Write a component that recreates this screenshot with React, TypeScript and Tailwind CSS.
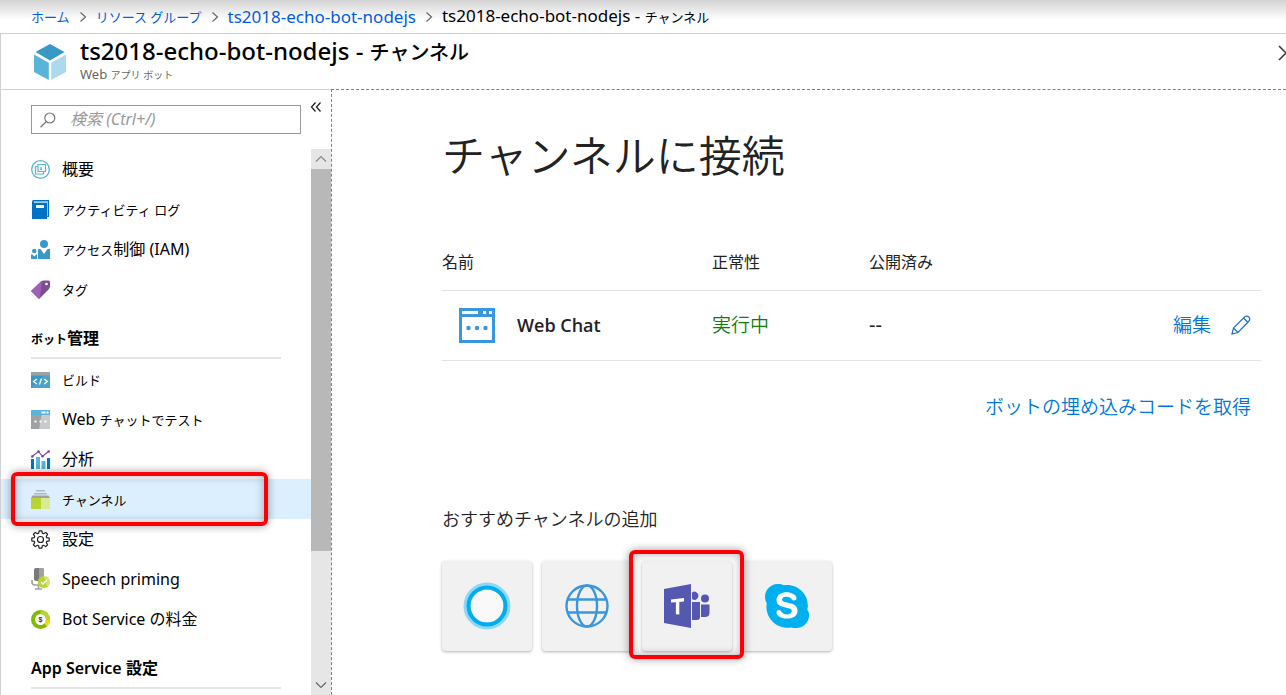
import React from 'react';

const Kana = ({ children }: { children: React.ReactNode }) => <span className="text-[13px]">{children}</span>;

const OverviewIcon = () => (
  <svg viewBox="0 0 19 19" className="size-[19px]" fill="none" stroke="#59b4d9" strokeWidth="1.3">
    <circle cx="9.5" cy="9.5" r="8.8" />
    <path d="M6.500 6.500H4.500v7.500h8v-2M7 4.500h7.500v7H7z" strokeWidth="1.2" />
    <path d="M10 7v2.500M9 9.500h2" strokeWidth="1.2" />
  </svg>
);
const BookIcon = () => (
  <svg viewBox="0 0 19 19" className="size-[19px]">
    <path d="M1 1.500Q1 0 2.500 0H18v17H16V2H3v1h13v16H1z" fill="#0072c6" />
    <path d="M2.500 1.200H17v15h-1V3H3z" fill="#a6cbe8" />
    <path d="M1 3h15v16H1z" fill="#0072c6" />
    <path d="M5 5h8v3H5z" fill="#fff" />
  </svg>
);
const PeopleIcon = () => (
  <svg viewBox="0 0 19 19" className="size-[19px]" fill="#3999c6">
    <circle cx="13" cy="4" r="4" />
    <circle cx="3.300" cy="11" r="2.300" />
    <path d="M7 9h2.500l3.500 5 3.500-5H19v10H7z" />
    <path d="M0 14.500h1.500l1.800 2 1.800-2H6V19H0z" />
  </svg>
);
const TagIcon = () => (
  <svg viewBox="0 0 19 19" className="size-[19px]">
    <path d="M0 11 10 1.500Q11 .5 13 .5h4.500Q19 .5 19 2v4Q19 7.500 18 9L8 19z" fill="#804998" />
    <path d="M0 11 10 1.500 11 .8 9 17.700 8 19z" fill="#9b62b3" />
    <circle cx="15.500" cy="4" r="1.300" fill="#fff" />
  </svg>
);
const BuildIcon = () => (
  <svg viewBox="0 0 19 19" className="size-[19px]">
    <path d="M0 2h19v16H0z" fill="#3999c6" />
    <path d="M0 2h19v3.500H0z" fill="#a0a1a2" />
    <path d="m0 18 13-12.500h6V18z" fill="#fff" opacity=".1" />
    <path d="m6 9-3.500 2.500L6 14M13 9l3.500 2.500L13 14M10.500 8.500l-2 6" fill="none" stroke="#fff" strokeWidth="1.200" />
  </svg>
);
const ChatTestIcon = () => (
  <svg viewBox="0 0 19 19" className="size-[19px]">
    <path d="M0 0h19v19H0z" fill="#c8cacc" />
    <path d="M0 5h10.500L8 19H0z" fill="#a0a1a2" />
    <path d="M0 0h19v5H0z" fill="#59b4d9" />
    <path d="M10.500 1.500h4v2h-4zM15.500 1.500h2v2h-2z" fill="#fff" />
    <path d="M3.500 10.500h2v2h-2zM8.500 10.500h2v2h-2zM13.500 10.500h2v2h-2z" fill="#fff" />
  </svg>
);
const AnalyticsIcon = () => (
  <svg viewBox="0 0 19 19" className="size-[19px]">
    <path d="M0 9h3v10H0zM16 8h3v11h-3z" fill="#0072c6" />
    <path d="M5 7h4v12H5zM10.500 11h4v8h-4z" fill="#59b4d9" />
    <path d="m1 6.500 6.500-5 4 5 6.500-5.500" fill="none" stroke="#804998" strokeWidth="1.200" />
    <g fill="#804998"><circle cx="1.300" cy="6.500" r="1.300" /><circle cx="7.500" cy="1.600" r="1.300" /><circle cx="11.500" cy="6.300" r="1.300" /><circle cx="17.700" cy="1.500" r="1.300" /></g>
  </svg>
);
const ChannelIcon = () => (
  <svg viewBox="0 0 19 19" className="size-[19px]">
    <path d="M5 0h9v1.500H5zM3 3h13v1.500H3z" fill="#b4b5b6" />
    <path d="M1.500 5.500h16L19 8H0z" fill="#a0a1a2" />
    <path d="M0 8h19v11H0z" fill="#b8d432" />
    <path d="M10 8h9v11h-9z" fill="#dbe991" />
  </svg>
);
const GearIcon = () => (
  <svg viewBox="0 0 24 24" className="size-[19px]" fill="none" stroke="#222" strokeWidth="1.500" strokeLinejoin="round">
    <path d="M10.300 1h3.400l.6 3 1.700.7 2.600-1.700 2.400 2.400-1.700 2.600.7 1.700 3 .6v3.400l-3 .6-.7 1.700 1.700 2.600-2.400 2.400-2.600-1.700-1.700.7-.6 3h-3.400l-.6-3-1.700-.7L5.400 21 3 18.600 4.700 16 4 14.300l-3-.6v-3.400l3-.6L4.700 8 3 5.400 5.400 3 8 4.700 9.700 4z" />
    <circle cx="12" cy="12" r="3.800" />
  </svg>
);
const MicIcon = () => (
  <svg viewBox="0 0 19 22" className="h-[22px] w-[19px]">
    <path d="M3 2q0-2 2-2h6q2 0 2 2v11H5q-2 0-2-2z" fill="#7a7a7a" />
    <path d="M8 0h3q2 0 2 2v11H8z" fill="#a0a1a2" />
    <path d="M1 12v2q0 3 3 3h6M7.500 17v4M4 21h7" fill="none" stroke="#a0a1a2" strokeWidth="1.600" />
    <circle cx="12.800" cy="14" r="6" fill="#b8d432" />
    <path d="M12.800 8a6 6 0 0 1 3.500 10.900z" fill="#d3e57d" />
    <path d="m10 14 2 2 4-4" fill="none" stroke="#fff" strokeWidth="1.400" />
  </svg>
);
const PriceIcon = () => (
  <svg viewBox="0 0 19 19" className="size-[19px]">
    <g fill="none" strokeWidth="4">
      <circle cx="9.500" cy="9.500" r="7.500" stroke="#7fba00" />
      <path d="M9.500 2a7.500 7.500 0 0 1 7.500 7.500" stroke="#b8d432" />
      <path d="M17 9.500a7.500 7.500 0 0 1-2.500 5.600" stroke="#fcd116" />
    </g>
    <text x="9.500" y="12" textAnchor="middle" fontSize="7" fontWeight="700" fill="#333" fontFamily="Liberation Sans, sans-serif">$</text>
  </svg>
);

type Item = { icon: React.ReactNode; label: React.ReactNode; active?: boolean };

const general: Item[] = [
  { icon: <OverviewIcon />, label: '概要' },
  { icon: <BookIcon />, label: <Kana>アクティビティ ログ</Kana> },
  { icon: <PeopleIcon />, label: <><Kana>アクセス</Kana>制御 (IAM)</> },
  { icon: <TagIcon />, label: <Kana>タグ</Kana> },
];
const management: Item[] = [
  { icon: <BuildIcon />, label: <Kana>ビルド</Kana> },
  { icon: <ChatTestIcon />, label: <>Web <Kana>チャットでテスト</Kana></> },
  { icon: <AnalyticsIcon />, label: '分析' },
  { icon: <ChannelIcon />, label: <Kana>チャンネル</Kana>, active: true },
  { icon: <GearIcon />, label: '設定' },
  { icon: <MicIcon />, label: 'Speech priming' },
  { icon: <PriceIcon />, label: 'Bot Service の料金' },
];

const frame = 'pointer-events-none absolute z-10 rounded-md border-4 border-[#fb0007] shadow-[0_0_8px_rgba(0,0,0,0.4),inset_0_0_10px_rgba(0,0,0,0.3)]';

function Menu({ items }: { items: Item[] }) {
  return (
    <ul>
      {items.map((item, i) => (
        <li key={i} className={item.active ? 'relative bg-[#dceffe]' : ''}>
          <a href="#" className="flex h-10 items-center gap-3 pl-[30px]">
            <span className="w-[19px] shrink-0">{item.icon}</span>
            <span className="whitespace-nowrap">{item.label}</span>
          </a>
          {item.active && <span className={`${frame} -inset-y-[7px] left-[10px] right-[43px]`} />}
        </li>
      ))}
    </ul>
  );
}

function Heading({ children }: { children: React.ReactNode }) {
  return (
    <h2 className="mx-[30px] mt-[10px] flex h-10 items-center border-b-2 border-[#e5e5e5] font-semibold">
      <span>{children}</span>
    </h2>
  );
}

const Chevron = () => (
  <svg viewBox="0 0 8 12" className="h-3 w-2 shrink-0" fill="none" stroke="#666" strokeWidth="1.200"><path d="m1.500 1.500 5 4.500-5 4.500" /></svg>
);

const channels = [
  {
    name: 'Cortana',
    icon: (
      <svg viewBox="0 0 48 48" className="size-12"><circle cx="24" cy="24" r="20" fill="#f9f9f9" stroke="#8ed8f5" strokeWidth="7" /><circle cx="24" cy="24" r="18.500" fill="none" stroke="#00aeef" strokeWidth="4" /></svg>
    ),
  },
  {
    name: 'Direct Line',
    icon: (
      <svg viewBox="0 0 44 44" className="size-11" fill="none" stroke="#3a96dd" strokeWidth="2.400"><circle cx="22" cy="22" r="20.500" /><ellipse cx="22" cy="22" rx="10" ry="20.500" /><path d="M3 15.500h38M3 28.500h38" /></svg>
    ),
  },
  {
    name: 'Microsoft Teams',
    selected: true,
    icon: (
      <svg viewBox="0 0 46 44" className="h-11 w-[46px]" fill="#5558af">
        <path d="M0 5 27 0v44L0 39z" />
        <path d="M7 15.500 20 14v3.500l-4.700.4V30.500l-3.400-.3V18.200L7 18.500z" fill="#fff" />
        <path d="M28 8.500a4 4 0 1 1 0 6.500zM28 18h8v15q0 3-3 3h-5zM37 20.500h8.500V29q0 4-4.500 4h-4z" />
        <circle cx="41" cy="14.500" r="4" />
      </svg>
    ),
  },
  {
    name: 'Skype',
    icon: (
      <svg viewBox="0 0 24 24" className="size-11" fill="#00aff0">
        <path d="M5 4h14v16H5z" fill="#fff" />
        <path d="M12.069 18.874c-4.023 0-5.820-1.979-5.820-3.464 0-.765.561-1.296 1.333-1.296 1.723 0 1.273 2.477 4.487 2.477 1.641 0 2.550-.895 2.550-1.811 0-.551-.269-1.160-1.354-1.429l-3.576-.895c-2.880-.724-3.403-2.286-3.403-3.751 0-3.047 2.861-4.191 5.549-4.191 2.471 0 5.393 1.373 5.393 3.199 0 .784-.688 1.240-1.453 1.240-1.469 0-1.198-2.037-4.164-2.037-1.469 0-2.292.664-2.292 1.617s1.153 1.258 2.157 1.487l2.637.587c2.891.649 3.624 2.346 3.624 3.944 0 2.476-1.902 4.324-5.722 4.324m11.084-4.882.029-.135.044-.28c.149-.531.217-1.081.217-1.650C23.473 5.710 18.341.577 12.045.577c-.605 0-1.214.059-1.806.165C9.258.179 8.139-.008 7.020-.008 3.140.007.009 3.136.009 7.008c0 1.290.345 2.498.946 3.537a11.500 11.500 0 0 0-.170 1.905c0 6.332 5.132 11.462 11.458 11.462.711 0 1.412-.075 2.097-.195A6.850 6.850 0 0 0 17.006 24c3.878 0 7.005-3.128 7.005-6.999 0-1.077-.240-2.091-.858-3.009" />
      </svg>
    ),
  },
];

export default function App() {
  return (
    <div className="flex h-screen flex-col overflow-hidden bg-white font-['Noto_Sans','Noto_Sans_CJK_JP',sans-serif] text-base leading-6 text-black">
      <nav aria-label="breadcrumb" className="flex h-[33px] shrink-0 items-center gap-[9px] whitespace-nowrap bg-linear-to-b from-[#d3d3d3] to-white to-60% pl-[31px] text-[17px]">
        <a href="#" className="text-[#015cda]"><Kana>ホーム</Kana></a>
        <Chevron />
        <a href="#" className="text-[#015cda]"><Kana>リソース グループ</Kana></a>
        <Chevron />
        <a href="#" className="text-[#015cda]">ts2018-echo-bot-nodejs</a>
        <Chevron />
        <span>ts2018-echo-bot-nodejs - <Kana>チャンネル</Kana></span>
      </nav>

      <div className="flex min-h-0 grow flex-col border-l border-t border-[#d0d0d0]">
        <header className="flex h-[55px] shrink-0 items-center pl-8">
          <svg viewBox="0 0 34 36" className="h-9 w-[34px] shrink-0">
            <path d="m17 0 14.500 8L17 16.500 2.500 8z" fill="#3999c6" />
            <path d="m1 10.500 14.800 8.300V36L1 28z" fill="#59b4d9" />
            <path d="m33 10.500-14.800 8.300V36L33 28z" fill="#abd9ee" />
          </svg>
          <div className="ml-[13px] grow pb-1">
            <h1 className="whitespace-nowrap text-2xl leading-7 font-medium">ts2018-echo-bot-nodejs - <span className="text-xl leading-7">チャンネル</span></h1>
            <p className="text-[13px] leading-[14px] text-[#666]">Web <span className="text-[10px]">アプリ ボット</span></p>
          </div>
          <button aria-label="閉じる" className="-mr-2 mb-[18px]">
            <svg viewBox="0 0 16 16" className="size-4" fill="none" stroke="#333" strokeWidth="1.500"><path d="m1 1 14 14M15 1 1 15" /></svg>
          </button>
        </header>

        <div className="flex min-h-0 grow">
          <aside className="flex w-[330px] shrink-0 flex-col border-t border-[#d0d0d0]">
            <div className="flex h-[59px] shrink-0 items-start pl-[30px] pt-[15px]">
              <label className="flex h-[29px] w-[270px] items-center border border-[#999] pl-2">
                <svg viewBox="0 0 16 16" className="size-4" fill="none" stroke="#777" strokeWidth="1.200"><circle cx="9.800" cy="6" r="5" /><path d="m6.200 9.700-5.700 5.500" /></svg>
                <input aria-label="検索" placeholder="検索 (Ctrl+/)" className="ml-[14px] w-52 bg-transparent pb-[2px] italic outline-none placeholder:text-[#999]" />
              </label>
              <button aria-label="折りたたむ" className="-mt-1 ml-[9px]">
                <svg viewBox="0 0 12 12" className="size-3" fill="none" stroke="#222" strokeWidth="1.300"><path d="M5.500 1.500 1.500 6l4 4.500M10.500 1.500 6.500 6l4 4.500" /></svg>
              </button>
            </div>
            <div className="flex min-h-0 grow">
              <div className="min-w-0 grow">
                <Menu items={general} />
                <Heading><span className="text-xs">ボット</span>管理</Heading>
                <Menu items={management} />
                <Heading>App Service 設定</Heading>
              </div>
              <div className="flex w-5 shrink-0 flex-col items-center bg-[#e6e6e6]">
                <svg viewBox="0 0 20 20" className="size-5 shrink-0" fill="none" stroke="#888" strokeWidth="1.200"><path d="m5 12.500 5-5 5 5" /></svg>
                <div className="h-7/10 w-full bg-[#b8b8b8]" />
                <svg viewBox="0 0 20 20" className="mt-auto size-5 shrink-0" fill="none" stroke="#666" strokeWidth="1.200"><path d="m5 7.500 5 5 5-5" /></svg>
              </div>
            </div>
          </aside>

          <main className="min-w-0 grow border-l border-t border-dashed border-[#1ba1e2] pl-[110px] pr-[25px] pt-[38px] text-[#222]">
            <h2 className="text-[43px] leading-[56px] font-[350]">チャンネルに接続</h2>
            <table className="mt-[50px] w-full table-fixed border-collapse text-left">
              <thead>
                <tr className="h-14 border-b border-[#e3e3e3]">
                  <th className="w-[270px] font-normal">名前</th>
                  <th className="w-[157px] font-normal">正常性</th>
                  <th className="font-normal">公開済み</th>
                  <th className="w-[100px]" />
                </tr>
              </thead>
              <tbody>
                <tr className="h-[70px] border-b border-[#e3e3e3]">
                  <td>
                    <span className="flex items-center gap-[22px] pl-[17px] text-lg font-semibold">
                      <svg viewBox="0 0 36 35" className="h-[35px] w-9 shrink-0" fill="#3a96dd">
                        <path fillRule="evenodd" d="M0 0h36v35H0zM3 3v3h16V3zM24 3v3h3V3zM30 3v3h3V3zM3 9v23h30V9z" />
                        <circle cx="9.500" cy="20" r="2.200" /><circle cx="18" cy="20" r="2.200" /><circle cx="26.500" cy="20" r="2.200" />
                      </svg>
                      <span className="font-['Open_Sans',sans-serif]">Web Chat</span>
                    </span>
                  </td>
                  <td className="text-[19px] font-[350] text-[#107c10]">実行中</td>
                  <td className="text-xl">--</td>
                  <td>
                    <a href="#" className="flex items-center justify-end gap-5 whitespace-nowrap pr-[10px] text-[19px] font-[350] text-[#0078d7]">
                      編集
                      <svg viewBox="0 0 20 20" className="size-5 shrink-0" fill="none" stroke="#1c6fd0" strokeWidth="1.200"><path d="m1 19 1.500-6L13.800 1.800q2.200-1.600 4 .2t.2 4L7 17.500zM2.500 13 7 17.500M12.500 3l4.500 4.500" /></svg>
                    </a>
                  </td>
                </tr>
              </tbody>
            </table>
            <div className="mt-8 pr-[10px] text-right text-[19px] leading-7">
              <a href="#" className="font-[350] text-[#0078d7]">ボットの埋め込みコードを取得</a>
            </div>
            <h3 className="mt-[86px] text-lg leading-6 font-[350]">おすすめチャンネルの追加</h3>
            <div className="mt-[30px] flex gap-[10px]">
              {channels.map((c) => (
                <button key={c.name} aria-label={c.name} className="relative flex size-[90px] items-center justify-center rounded-sm bg-[#f1f1f1] shadow-[0_1px_3px_rgba(0,0,0,0.3)]">
                  {c.icon}
                  {c.selected && <span className={`${frame} -bottom-2 -left-[13px] -right-3 -top-[11px]`} />}
                </button>
              ))}
            </div>
          </main>
        </div>
      </div>
    </div>
  );
}
